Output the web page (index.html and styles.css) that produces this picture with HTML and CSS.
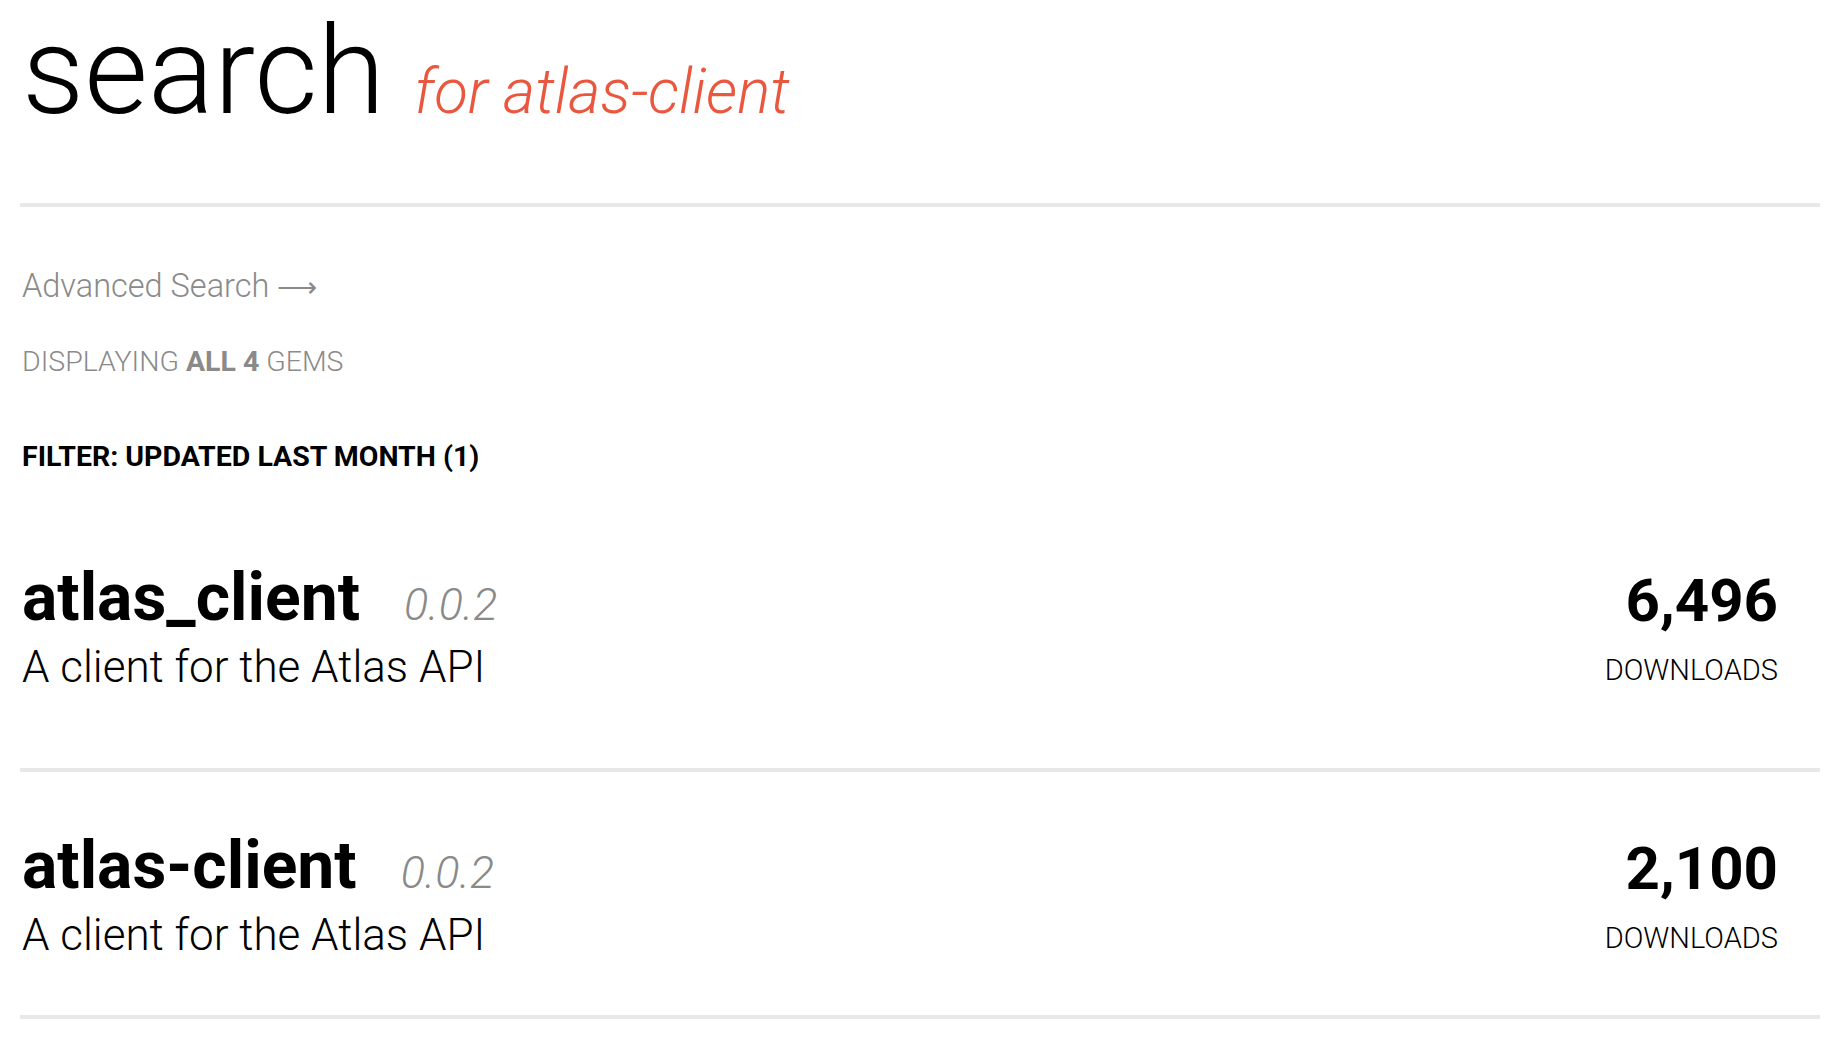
FILE: index.html
```html
<!DOCTYPE html>
<html lang="en">
<head>
<meta charset="utf-8">
<title>search | RubyGems</title>
<link rel="stylesheet" href="styles.css">
</head>
<body>
<main class="page">
  <h1 class="title"><span class="title-main">search</span><span class="title-sub">for atlas-client</span></h1>
  <div class="rule"></div>
  <a class="adv" href="#">Advanced Search <span class="arrow">⟶</span></a>
  <p class="count">Displaying <b>all 4</b> gems</p>
  <h2 class="filter">Filter: Updated last month (1)</h2>
  <div class="gems">
    <a class="gem" href="#">
      <div class="gem-info">
        <h3 class="gem-title"><span class="gem-name">atlas_client</span><span class="gem-version">0.0.2</span></h3>
        <p class="gem-desc">A client for the Atlas API</p>
      </div>
      <div class="gem-stats">
        <p class="gem-downloads">6,496</p>
        <p class="gem-label">Downloads</p>
      </div>
    </a>
    <a class="gem" href="#">
      <div class="gem-info">
        <h3 class="gem-title"><span class="gem-name">atlas-client</span><span class="gem-version">0.0.2</span></h3>
        <p class="gem-desc">A client for the Atlas API</p>
      </div>
      <div class="gem-stats">
        <p class="gem-downloads">2,100</p>
        <p class="gem-label">Downloads</p>
      </div>
    </a>
  </div>
</main>
</body>
</html>
```

FILE: styles.css
```css
html, body {
  margin: 0;
  padding: 0;
  background: #fff;
}

body {
  font-family: Roboto, "Liberation Sans", sans-serif;
  color: #000;
}

.page {
  padding: 0 20px;
}

.title {
  margin: 0;
  padding: 9px 0 0 2px;
  font-size: 123px;
  line-height: 125px;
  font-weight: 300;
  white-space: nowrap;
}

.title-sub {
  margin-left: 29px;
  font-size: 62px;
  line-height: 1;
  font-style: italic;
  font-weight: 300;
  color: #e9573f;
}

.rule {
  height: 4px;
  margin-top: 69px;
  background: #e8e8ea;
}

.adv {
  display: block;
  margin-top: 59px;
  padding-left: 2px;
  font-size: 32.5px;
  line-height: 40px;
  font-weight: 300;
  color: #8a8a8a;
  text-decoration: none;
}

.arrow {
  font-family: "DejaVu Sans", sans-serif;
  font-size: 28px;
}

.count {
  margin: 36px 0 0;
  padding-left: 2px;
  font-size: 28.5px;
  line-height: 36px;
  font-weight: 300;
  color: #8a8a8a;
  text-transform: uppercase;
}

.count b {
  font-weight: 700;
}

.filter {
  margin: 59px 0 0;
  padding-left: 2px;
  font-size: 28.5px;
  line-height: 36px;
  font-weight: 700;
  text-transform: uppercase;
}

.gems {
  margin-top: 29px;
}

.gem {
  display: flex;
  justify-content: space-between;
  align-items: flex-start;
  padding: 58px 42px 54px 2px;
  border-bottom: 4px solid #e8e8ea;
  color: #000;
  text-decoration: none;
}

.gem:first-child {
  padding-bottom: 75px;
}

.gem-title {
  margin: 0;
  font-size: 66px;
  line-height: 72px;
  font-weight: 700;
  white-space: nowrap;
}

.gem-version {
  margin-left: 44px;
  font-size: 45px;
  line-height: 1;
  font-style: italic;
  font-weight: 300;
  color: #8a8a8a;
}

.gem-desc {
  margin: 7px 0 0;
  font-size: 44px;
  line-height: 52px;
  font-weight: 300;
}

.gem-stats {
  padding-top: 5px;
  text-align: right;
}

.gem-downloads {
  margin: 0;
  font-size: 60px;
  line-height: 68px;
  font-weight: 700;
}

.gem-label {
  margin: 17px 0 0;
  font-size: 29px;
  line-height: 36px;
  font-weight: 300;
  text-transform: uppercase;
}
```
